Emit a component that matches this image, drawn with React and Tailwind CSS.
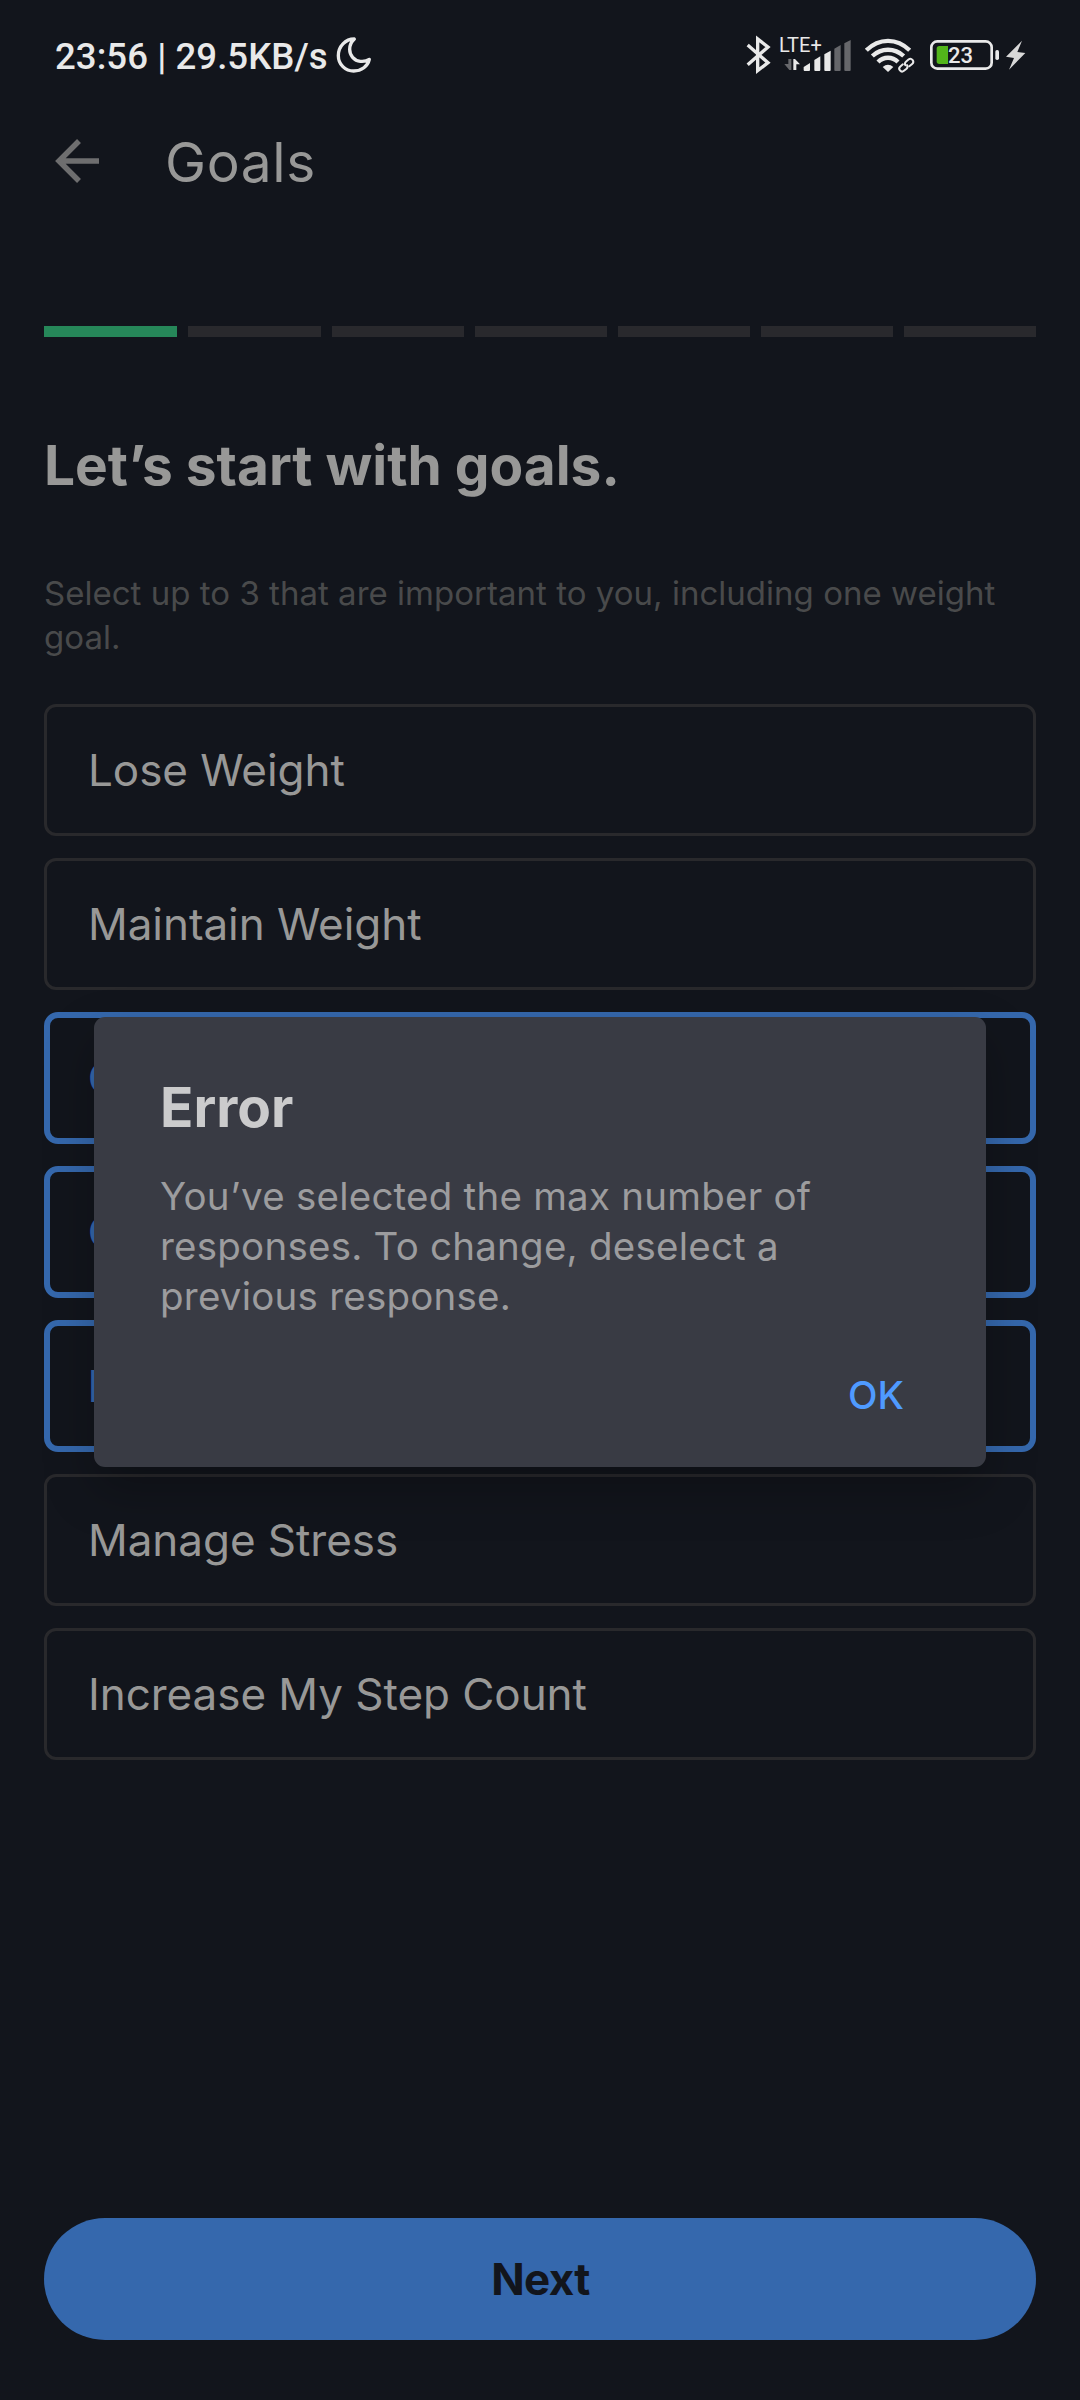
import { useState } from "react";

const GOALS = [
  "Lose Weight",
  "Maintain Weight",
  "Gain Weight",
  "Gain Muscle",
  "Modify My Diet",
  "Manage Stress",
  "Increase My Step Count",
];

function MoonIcon() {
  return (
    <svg className="h-9 w-9" viewBox="886 51 108 108" fill="none" stroke="#e9e9e9" strokeWidth="10" strokeLinejoin="round">
      <path d="M941 57C914 57 893 79 893 107C893 133 914 153 939 153C963 153 981 139 986 118C977 124 968 125 959 124C940 122 927 106 927 88C927 75 932 65 941 57Z" />
    </svg>
  );
}

function BluetoothIcon() {
  return (
    <svg className="h-10 w-[25px]" viewBox="48 45 75 120" fill="none" stroke="#e9e9e9" strokeWidth="10" strokeLinejoin="miter">
      <path d="M53 75L114 128L83 152V57L114 81L53 134" />
    </svg>
  );
}

function SignalIcon() {
  return (
    <div className="relative ml-2 h-10 w-[74px]">
      <span className="absolute left-0 top-0 font-[Roboto] text-[20px] leading-5 text-[#e9e9e9]">LTE+</span>
      <svg className="h-10 w-[74px]" viewBox="147 45 222 120" fill="#e9e9e9">
        <path fill="#66676b" d="M175 117H184V150H178L163 132H175Z" />
        <path d="M190 150V117H195L210 133H199V150Z" />
        <path d="M221 141L240 129V150Q240 153 237 153H224Q221 153 221 150Z" />
        <path d="M253 120L271 109V150Q271 153 268 153H256Q253 153 253 150Z" />
        <path d="M283 103L302 92V150Q302 153 299 153H286Q283 153 283 150Z" />
        <g fill="#66676b">
          <path d="M313 86L332 75V150Q332 153 329 153H316Q313 153 313 150Z" />
          <path d="M343 70L362 60V150Q362 153 359 153H346Q343 153 343 150Z" />
        </g>
      </svg>
    </div>
  );
}

function WifiIcon() {
  return (
    <svg className="ml-[11px] h-10 w-[51px]" viewBox="402 45 153 120" fill="none" stroke="#e9e9e9">
      <path strokeWidth="13" d="M409 91C447 53 501 53 539 91" />
      <path strokeWidth="13" d="M427 108C454 83 494 83 521 108" />
      <path strokeWidth="13" d="M444 126C461 109 487 109 504 126" />
      <path fill="#e9e9e9" stroke="none" d="M474 156L458 141Q474 127 490 141Z" />
      <g transform="rotate(-40 529 136)" strokeWidth="11" stroke="#12151c">
        <rect x="504" y="128" width="27" height="17" rx="8.5" />
        <rect x="527" y="127" width="27" height="17" rx="8.5" />
      </g>
      <g transform="rotate(-40 529 136)" strokeWidth="6" strokeLinecap="round">
        <path d="M523 127H513A8.500 8.500 0 0 0 513 144H523A8.500 8.500 0 0 0 531 137" />
        <path d="M534 144H545A8.500 8.500 0 0 0 545 127H535A8.500 8.500 0 0 0 527 134" />
      </g>
    </svg>
  );
}

function BatteryIcon() {
  return (
    <div className="relative ml-[14px] h-10 w-[71px]">
      <svg className="h-10 w-[71px]" viewBox="597 45 213 120">
        <rect x="604" y="64" width="181" height="82" rx="18" fill="none" stroke="#e9e9e9" strokeWidth="8" />
        <rect x="796" y="90" width="11" height="30" rx="5" fill="#e9e9e9" />
        <path d="M628 78H654V132H628Q620 132 620 124V86Q620 78 628 78Z" fill="#52b51a" />
      </svg>
      <span className="absolute left-[19px] top-[9px] font-[Roboto] text-[22px] font-medium leading-6 text-[#e9e9e9]">23</span>
    </div>
  );
}

function BoltIcon() {
  return (
    <svg className="ml-[5px] h-10 w-[21px]" viewBox="825 45 63 120" fill="#d8d8d8">
      <path d="M876 62L828 110L852 114L837 149L886 99L862 96Z" />
    </svg>
  );
}

function StatusBar() {
  return (
    <div className="flex h-[113px] items-center pl-[55px] pr-[54px]">
      <span className="font-[Roboto] text-[36.6px] font-medium leading-10 tracking-[0.05px] text-[#e9e9e9]">23:56 | 29.5KB/s</span>
      <div className="ml-[8px] pb-[3px]">
        <MoonIcon />
      </div>
      <div className="ml-auto flex pb-[3px]">
        <BluetoothIcon />
        <SignalIcon />
        <WifiIcon />
        <BatteryIcon />
        <BoltIcon />
      </div>
    </div>
  );
}

function GoalCard({ label, selected }) {
  return (
    <button
      className={
        selected
          ? "flex h-[132px] items-center rounded-[14px] border-[6px] border-[#3568ad] pl-[38px] text-[44px] font-semibold text-[#3568ad]"
          : "flex h-[132px] items-center rounded-[12px] border-[3px] border-[#29292c] pl-[41px] text-[44px] tracking-[-0.05px] text-[#989897]"
      }
    >
      {label}
    </button>
  );
}

function ErrorDialog({ onClose }) {
  return (
    <div className="absolute left-[94px] top-[1017px] flex h-[450px] w-[892px] flex-col rounded-[11px] bg-[#393b44] px-[66px] pt-[57px] shadow-[0_22px_50px_rgba(0,0,0,0.25)]">
      <h2 className="text-[55px] font-bold leading-[66px] text-[#cbcbcc]">Error</h2>
      <p className="mt-[31px] whitespace-nowrap text-[38.5px] leading-[50px] tracking-[0.23px] text-[#9c9c9e]">
        You’ve selected the max number of
        <br />
        responses. To change, deselect a
        <br />
        previous response.
      </p>
      <button onClick={onClose} className="mr-4 mt-[49px] self-end text-[38.5px] font-medium leading-[50px] text-[#4f9aff]">
        OK
      </button>
    </div>
  );
}

export default function App() {
  const [open, setOpen] = useState(true);
  return (
    <div className="relative flex h-[2400px] w-[1080px] flex-col bg-[#12151c] font-[Inter,sans-serif]">
      <StatusBar />
      <header className="flex h-[98px] items-center pl-[55px]">
        <svg className="mb-[2px] h-11 w-11" viewBox="0 0 44 44" fill="none" stroke="#6e6e6f" strokeWidth="5.5">
          <path d="M44 22H4M24 2L4 22L24 42" />
        </svg>
        <h1 className="ml-[66px] text-[55px] leading-[66px] tracking-[0.6px] text-[#989897]">Goals</h1>
      </header>
      <main className="flex flex-col px-11">
        <div className="mt-[115px] grid h-[11px] grid-cols-[133px_133px_repeat(5,132px)] gap-[11px]">
          {GOALS.map((goal, i) => (
            <div key={goal} className={i === 0 ? "bg-[#268759]" : "bg-[#29292d]"} />
          ))}
        </div>
        <h2 className="mt-[95px] text-[55px] font-bold leading-[66px] text-[#989897]">Let’s start with goals.</h2>
        <p className="mt-[73px] text-[33px] leading-[44px] tracking-[0.02px] text-[#494a4b]">
          Select up to 3 that are important to you, including one weight goal.
        </p>
        <div className="mt-[45px] flex flex-col gap-[22px]">
          {GOALS.map((goal, i) => (
            <GoalCard key={goal} label={goal} selected={i >= 2 && i <= 4} />
          ))}
        </div>
        <button className="mt-[458px] h-[122px] rounded-full bg-[#3568ad] pl-px text-[44px] font-bold tracking-[-0.6px] text-[#12151c]">
          Next
        </button>
      </main>
      {open && <ErrorDialog onClose={() => setOpen(false)} />}
    </div>
  );
}
